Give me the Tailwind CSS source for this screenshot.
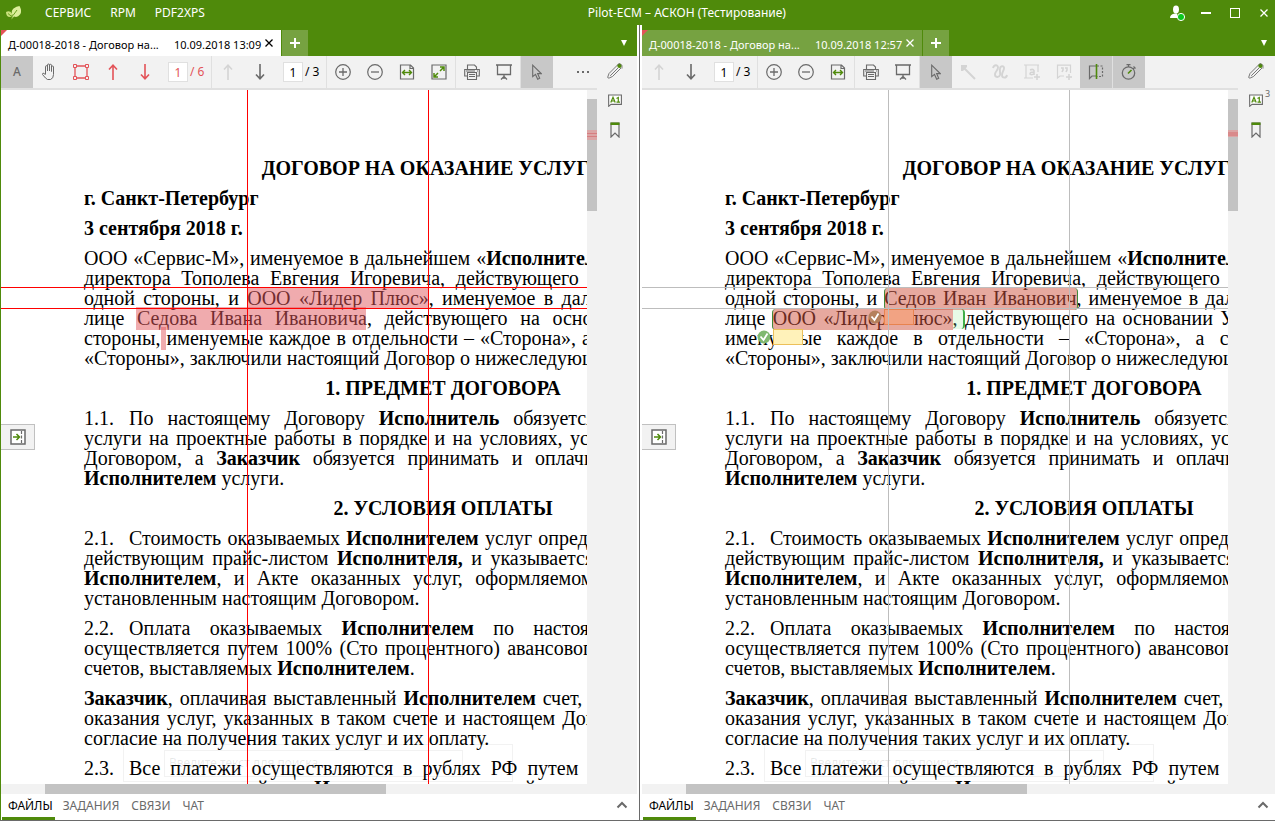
<!DOCTYPE html>
<html lang="ru">
<head>
<meta charset="utf-8">
<title>Pilot-ECM – АСКОН (Тестирование)</title>
<script src="https://cdn.jsdelivr.net/npm/@tailwindcss/browser@4"></script>
</head>
<body class="flex h-screen flex-col overflow-hidden bg-white font-['Noto_Sans','Open_Sans',sans-serif] text-xs text-black">

<svg class="hidden" aria-hidden="true">
  <symbol id="hand" viewBox="0 0 16 18"><path d="M4.500 11V3.700a1 1 0 0 1 2 0V8V2a1 1 0 0 1 2 0v6V2.300a1 1 0 0 1 2 0V8.500V4a1 1 0 0 1 2 0v7.500q0 4-3 5H6.500Q5 16 1.500 11.500Q1.200 10 3 10.200L4.500 12" fill="none" stroke="currentColor" stroke-linejoin="round"/></symbol>
  <symbol id="frame" viewBox="0 0 16 16"><path d="M2 2h12v12H2z" fill="none" stroke="currentColor" stroke-width="1.300"/><path d="M.5.500h3v3h-3zM12.500.500h3v3h-3zM.5 12.500h3v3h-3zM12.500 12.500h3v3h-3z" fill="#f2f2f2" stroke="currentColor"/></symbol>
  <symbol id="up" viewBox="0 0 10 16"><path d="M5 16V1.500M1 5.500L5 1.200l4 4.300" fill="none" stroke="currentColor" stroke-width="1.600"/></symbol>
  <symbol id="down" viewBox="0 0 10 16"><path d="M5 0v14.500M1 10.500l4 4.300 4-4.300" fill="none" stroke="currentColor" stroke-width="1.600"/></symbol>
  <symbol id="plus" viewBox="0 0 16 16"><path d="M8 4v8M4 8h8" stroke="currentColor" stroke-width="1.300"/><circle cx="8" cy="8" r="7.300" fill="none" stroke="currentColor" stroke-width="1.200"/></symbol>
  <symbol id="minus" viewBox="0 0 16 16"><path d="M4 8h8" stroke="currentColor" stroke-width="1.300"/><circle cx="8" cy="8" r="7.300" fill="none" stroke="currentColor" stroke-width="1.200"/></symbol>
  <symbol id="fitw" viewBox="0 0 16 16"><path d="M1.500 1h10l3 3v11h-13zM11 1v3.500h3.500" fill="none" stroke="currentColor" stroke-width="1.200"/><path d="M4 8.500h8M6 6L3.500 8.500 6 11M10 6l2.500 2.500L10 11" fill="none" stroke="#4f8a0b" stroke-width="1.400"/></symbol>
  <symbol id="fitp" viewBox="0 0 16 16"><path d="M1 1h14v14H1z" fill="none" stroke="currentColor" stroke-width="1.200"/><path d="M9 7l3.500-3.500M9 3h4v4M7 9l-3.500 3.500M3 9v4h4" fill="none" stroke="#4f8a0b" stroke-width="1.500"/></symbol>
  <symbol id="print" viewBox="0 0 16 16"><path d="M3.500 5V1h7l2 2v2M3.500 12H.700V5.500h14.600V12h-2.800M3.500 8.500h9v7h-9zM5 10.500h6M5 12.500h6" fill="none" stroke="currentColor" stroke-width="1.100"/><path d="M2 7h9M13 7h1" stroke="currentColor"/></symbol>
  <symbol id="screen" viewBox="0 0 16 16"><path d="M0 1h16M1.500 1v9.500h13V1M8 10.500V15M5 15.500l3-3 3 3" fill="none" stroke="currentColor" stroke-width="1.300"/></symbol>
  <symbol id="cursor" viewBox="0 0 10 16"><path d="M.700 1.200v11.500l2.800-2.300 2.200 4.800 2-1-2.100-4.600h3.600z" fill="none" stroke="currentColor" stroke-width="1.100"/></symbol>
  <symbol id="clip" viewBox="0 0 16 16"><path d="M10.500 2L2 10.500L.700 14.200Q.800 15.500 2.200 15L5.500 13.500L14 5M3.200 12.800L11 5" fill="none" stroke="currentColor" stroke-width=".9"/><circle cx="12.500" cy="2.800" r="2.200" fill="#4f8a0b"/><path d="M10.500 1.500L13 .600l2 2v3" fill="none" stroke="currentColor" stroke-width=".8"/></symbol>
  <symbol id="note" viewBox="0 0 14 13"><path d="M.600 1h12.800v9.400H3L.700 12.300z" fill="#fff" stroke="currentColor" stroke-width="1.100"/><path d="M2.800 8.500L5 3.200l2.200 5.300M3.500 7h3M8.500 4.500l1.800-1V8M8.500 8.200h3.500" fill="none" stroke="#4f8a0b" stroke-width="1.200"/></symbol>
  <symbol id="mark" viewBox="0 0 10 16"><path d="M1 1h8v14l-4-4-4 4z" fill="none" stroke="currentColor" stroke-width="1.200"/><path d="M.500.500h9V3h-9z" fill="#4f8a0b"/></symbol>
  <symbol id="leader" viewBox="0 0 16 16"><path d="M15 15L3 3" stroke="currentColor" stroke-width="2"/><path d="M1 7V1h6v2L3 7z" fill="currentColor"/></symbol>
  <symbol id="squiggle" viewBox="0 0 16 16"><path d="M1 4C2 .500 6 .500 6 3.500 6 6.500 3 7.500 3 10.500 3 13.500 7 14 8 11 8.500 9 7.500 7 8 4.500 8.500 1.500 12.500 1.500 12 4.500 11.700 7 10 8 10 11 10 14.500 14.500 14.500 15 11" fill="none" stroke="currentColor" stroke-width="1.900"/></symbol>
  <symbol id="textplus" viewBox="0 0 16 16"><path d="M0 1h15M2 1v13M14 1v7M0 14h9" fill="none" stroke="currentColor" stroke-width="1.200"/><path d="M6 6q3-1.500 4 .500V11M10 8Q6 8 6 9.700T10 10M10 13h6M13 10v6" fill="none" stroke="currentColor" stroke-width="1.500"/></symbol>
  <symbol id="noteplus" viewBox="0 0 16 16"><path d="M8 12H4l-2.500 2V1.200h13V9" fill="none" stroke="currentColor" stroke-width="1.200"/><path d="M5 4h2v2L6 8M9 4h2v2l-1 2M10 13h6M13 10v6" fill="none" stroke="currentColor" stroke-width="1.600"/></symbol>
  <symbol id="compare" viewBox="0 0 16 16"><path d="M8 2H1.500v12.500L4 12h4" fill="none" stroke="currentColor" stroke-width="1.200"/><path d="M9 2h5.500v10.500H9" fill="none" stroke="currentColor" stroke-width="1.200" stroke-dasharray="2 1.500"/><path d="M8.500 0v15" stroke="#4f8a0b" stroke-width="1.600"/></symbol>
  <symbol id="timer" viewBox="0 0 16 16"><circle cx="7.500" cy="9" r="6.200" fill="none" stroke="currentColor" stroke-width="1.300"/><path d="M5.500.700h4M7.500 1v2M12.500 2.500l2 2M12 5l1.500-1.500" stroke="currentColor" stroke-width="1.200"/><path d="M7 9.500l3.500-3.500" stroke="#4f8a0b" stroke-width="1.600"/></symbol>
  <symbol id="panel" viewBox="0 0 16 16"><path d="M1 1h14v14H1z" fill="#fff" stroke="currentColor" stroke-width="1.500"/><path d="M11.500 2v13" stroke="currentColor" stroke-width="1.200" stroke-dasharray="3 1.500"/><path d="M3 8h6.500M6.500 5l3 3-3 3" fill="none" stroke="#4f8a0b" stroke-width="1.500"/></symbol>
  <symbol id="chev" viewBox="0 0 12 8"><path d="M1.500 6.500L6 2l4.500 4.500" fill="none" stroke="currentColor" stroke-width="2"/></symbol>
  <symbol id="add" viewBox="0 0 10 10"><path d="M5 0v10M0 5h10" stroke="currentColor" stroke-width="2"/></symbol>
  <symbol id="cross" viewBox="0 0 8 8"><path d="M.500.500l7 7M7.500.500l-7 7" stroke="currentColor" stroke-width="1.300"/></symbol>
  <symbol id="tick" viewBox="0 0 14 14"><circle cx="7" cy="7" r="6.500" fill="currentColor"/><path d="M3.500 6.500L6.500 10 10.500 3.500" fill="none" stroke="#fff" stroke-width="1.800"/></symbol>
</svg>

<header class="flex h-[25px] shrink-0 items-center bg-[#4f8a0b] text-white">
  <svg class="ml-1.5 mr-6 h-4 w-[15px]" viewBox="0 0 15 16"><path d="M0 7q3.500-2 6 1.500Q6.500 12 4 12Q0 12 0 7z" fill="#c9e07c"/><path d="M6.500 10q-2-4 1-6.500t6-2.500q3 5 .500 8.500T8 11.500l-2.500 3" fill="#dcee9c"/><path d="M2 8.500l3 2.500M7 10.500l4-5.500M6 10v4" stroke="#6a9f20" fill="none"/></svg>
  <nav class="flex gap-[19px]"><button>СЕРВИС</button><button>RPM</button><button>PDF2XPS</button></nav>
  <h1 class="flex-1 text-center">Pilot-ECM – АСКОН (Тестирование)</h1>
  <div class="flex items-center pr-[7px]">
    <button class="mr-4" aria-label="Пользователь"><svg class="h-4 w-4" viewBox="0 0 16 16"><ellipse cx="7" cy="4.500" rx="3" ry="4" fill="#fff"/><path d="M1 13q0-4 5-4.500h2L9 13z" fill="#fff"/><circle cx="12" cy="12" r="3.600" fill="#0bc81e" stroke="#fff"/></svg></button>
    <button class="mr-[19px]" aria-label="Свернуть"><span class="block h-0.5 w-2.5 bg-white"></span></button>
    <button class="mr-5" aria-label="Развернуть"><span class="block h-2.5 w-2.5 border border-white"></span></button>
    <button aria-label="Закрыть"><svg class="h-2 w-2"><use href="#cross"/></svg></button>
  </div>
</header>

<main class="grid min-h-0 flex-1 grid-cols-[1px_636fr_5px_633fr] border-b border-[#6a6a6a]">
  <div class="bg-[#4f8a0b]"></div>

  <section class="flex min-h-0 min-w-0 flex-col">
    <div class="flex h-[31px] shrink-0 items-end bg-[#4f8a0b]">
      <div class="relative flex h-[26px] w-[280px] items-center whitespace-nowrap bg-white pl-[7px] pr-2 pt-1 text-[11px]">
        <span class="absolute left-0 top-0 h-1.5 w-1.5 bg-[#e35358] [clip-path:polygon(0_0,100%_0,0_100%)]"></span>
        <span class="w-[166px]">Д-00018-2018 - Договор на...</span><span>10.09.2018 13:09</span>
        <button class="mb-1 ml-auto" aria-label="Закрыть вкладку"><svg class="h-2 w-2"><use href="#cross"/></svg></button>
      </div>
      <button class="ml-px flex h-[26px] w-[26px] items-center justify-center bg-[#76a241] text-white" aria-label="Новая вкладка"><svg class="h-2.5 w-2.5"><use href="#add"/></svg></button>
      <button class="ml-auto mr-2.5 h-[26px] text-white" aria-label="Список вкладок"><span class="block h-1.5 w-1.5 bg-white [clip-path:polygon(0_0,100%_0,50%_100%)]"></span></button>
    </div>
    <div class="flex min-h-0 flex-1">
      <div class="flex min-w-0 flex-1 flex-col">
        <div class="flex h-[34px] shrink-0 items-stretch border-b-2 border-[#e0e0e0] bg-[#f2f2f2] text-[#6a6a6a]">
          <button class="w-8 bg-[#c8c8c8] font-medium">A</button>
          <button class="flex w-8 items-center justify-center" aria-label="Рука"><svg class="h-[18px] w-4"><use href="#hand"/></svg></button>
          <button class="flex w-8 items-center justify-center text-[#e35358]" aria-label="Рамка"><svg class="h-4 w-4"><use href="#frame"/></svg></button>
          <button class="flex w-8 items-center justify-center text-[#e35358]" aria-label="Предыдущее отличие"><svg class="h-4 w-2.5"><use href="#up"/></svg></button>
          <button class="flex w-8 items-center justify-center text-[#e35358]" aria-label="Следующее отличие"><svg class="h-4 w-2.5"><use href="#down"/></svg></button>
          <label class="flex w-[50px] items-center gap-0.5 pl-[7px] text-[#e35358]"><input class="h-5 w-5 border border-[#e0e0e0] bg-white text-center" value="1" aria-label="Отличие"><span>/ 6</span></label>
          <span class="w-px bg-[#e0e0e0]"></span>
          <button class="flex w-8 items-center justify-center text-[#d4d4d4]" aria-label="Предыдущая страница"><svg class="h-4 w-2.5"><use href="#up"/></svg></button>
          <button class="flex w-8 items-center justify-center" aria-label="Следующая страница"><svg class="h-4 w-2.5"><use href="#down"/></svg></button>
          <label class="flex w-[50px] items-center gap-0.5 pl-[7px] text-black"><input class="h-5 w-5 border border-[#e0e0e0] bg-white text-center" value="1" aria-label="Страница"><span>/ 3</span></label>
          <span class="w-px bg-[#e0e0e0]"></span>
          <button class="flex w-8 items-center justify-center" aria-label="Увеличить"><svg class="h-4 w-4"><use href="#plus"/></svg></button>
          <button class="flex w-8 items-center justify-center" aria-label="Уменьшить"><svg class="h-4 w-4"><use href="#minus"/></svg></button>
          <button class="flex w-8 items-center justify-center" aria-label="По ширине"><svg class="h-4 w-4"><use href="#fitw"/></svg></button>
          <button class="flex w-8 items-center justify-center" aria-label="Страница целиком"><svg class="h-4 w-4"><use href="#fitp"/></svg></button>
          <span class="w-px bg-[#e0e0e0]"></span>
          <button class="flex w-8 items-center justify-center" aria-label="Печать"><svg class="h-4 w-4"><use href="#print"/></svg></button>
          <button class="flex w-8 items-center justify-center" aria-label="Презентация"><svg class="h-4 w-4"><use href="#screen"/></svg></button>
          <span class="w-px bg-[#e0e0e0]"></span>
          <button class="flex w-8 items-center justify-center bg-[#c8c8c8]" aria-label="Курсор"><svg class="h-4 w-2.5"><use href="#cursor"/></svg></button>
          <button class="ml-auto mr-2 flex items-center gap-[3px]" aria-label="Ещё"><span class="h-0.5 w-0.5 bg-[#6a6a6a]"></span><span class="h-0.5 w-0.5 bg-[#6a6a6a]"></span><span class="h-0.5 w-0.5 bg-[#6a6a6a]"></span></button>
        </div>
        <div class="flex min-h-0 flex-1">
          <div class="relative min-w-0 flex-1 overflow-hidden bg-white">
            <article class="flex w-[801px] flex-col gap-2.5 whitespace-nowrap pl-[83px] pt-[68px] font-['Liberation_Serif',serif] text-xl/5 text-black">
              <h2 class="text-center font-bold">ДОГОВОР НА ОКАЗАНИЕ УСЛУГ №1</h2>
              <p class="font-bold">г. Санкт-Петербург</p>
              <p class="font-bold">3 сентября 2018 г.</p>
              <div class="[text-align-last:justify]">
                <p>ООО «Сервис-М», именуемое в дальнейшем «<b>Исполнитель</b>», в лице генерального</p>
                <p>директора Тополева Евгения Игоревича, действующего на основании Устава, с</p>
                <p>одной стороны, и ООО «Лидер Плюс», именуемое в дальнейшем «<b>Заказчик</b>», в</p>
                <p>лице Седова Ивана Ивановича, действующего на основании Устава, с одной</p>
                <p>стороны, именуемые каждое в отдельности – «Сторона», а совместно далее вместе</p>
                <p class="[text-align-last:left]">«Стороны», заключили настоящий Договор о нижеследующем:</p>
              </div>
              <div data-terms class="contents"></div>
            </article>
            <div class="absolute left-[246px] top-[197px] h-[22px] w-[182px] bg-[#e1575d]/50"></div>
            <div class="absolute left-[135px] top-[217px] h-[23px] w-[230px] bg-[#e1575d]/50"></div>
            <div class="absolute left-[160px] top-[237px] h-[23px] w-[5px] bg-[#e1575d]/50"></div>
            <div class="absolute inset-y-0 left-[246px] w-px bg-[#ff0000]"></div>
            <div class="absolute inset-y-0 left-[427px] w-px bg-[#ff0000]"></div>
            <div class="absolute inset-x-0 top-[197px] h-px bg-[#ff0000]"></div>
            <div class="absolute inset-x-0 top-[218px] h-px bg-[#ff0000]"></div>
            <button class="absolute left-0 top-[334px] flex h-[26px] w-[34px] items-center justify-center border border-l-0 border-[#c0c0c0] bg-[#f2f2f2] text-[#6a6a6a]" aria-label="Показать панель"><svg class="h-4 w-4"><use href="#panel"/></svg></button>
          </div>
          <div class="relative w-2.5 bg-[#f2f2f2]">
            <div class="absolute inset-x-0 top-[9px] h-28 bg-[#c3c3c3]"></div>
            <div class="absolute inset-x-0 top-10 flex h-2.5 flex-col justify-evenly bg-[#dba5a5]"><span class="h-px bg-[#d77e80]"></span><span class="h-px bg-[#d77e80]"></span></div>
          </div>
        </div>
        <div class="h-2.5 shrink-0 bg-[#f2f2f2] pl-11"><div class="h-2.5 w-[341px] bg-[#c3c3c3]"></div></div>
      </div>
      <aside class="flex w-10 shrink-0 flex-col items-center gap-[15px] bg-[#f2f2f2] pr-1 pt-[7px] text-[#6a6a6a]">
        <button aria-label="Аннотации"><svg class="h-4 w-4"><use href="#clip"/></svg></button>
        <button aria-label="Замечания"><svg class="h-[13px] w-3.5"><use href="#note"/></svg></button>
        <button aria-label="Закладки"><svg class="h-4 w-2.5"><use href="#mark"/></svg></button>
      </aside>
    </div>
    <div class="flex h-[26px] shrink-0 items-stretch bg-white text-[#6a6a6a]">
      <button class="ml-px mr-2 border-b-[3px] border-[#4f8a0b] pl-1.5 pr-0.5 text-black">ФАЙЛЫ</button>
      <div class="flex gap-3 pb-[3px]"><button>ЗАДАНИЯ</button><button>СВЯЗИ</button><button>ЧАТ</button></div>
      <button class="ml-auto mr-[9px] pb-1" aria-label="Развернуть панель"><svg class="h-2 w-3"><use href="#chev"/></svg></button>
    </div>
  </section>

  <div class="flex justify-center bg-white"><div class="w-px bg-[#6a6a6a]"></div></div>

  <section class="flex min-h-0 min-w-0 flex-col">
    <div class="flex h-[31px] shrink-0 items-end bg-[#4f8a0b]">
      <div class="relative flex h-[26px] w-[280px] items-center whitespace-nowrap bg-[#76a241] pl-[7px] pr-2 pt-1 text-[11px] text-white">
        <span class="absolute left-0 top-0 h-1.5 w-1.5 bg-[#e35358] [clip-path:polygon(0_0,100%_0,0_100%)]"></span>
        <span class="w-[166px]">Д-00018-2018 - Договор на...</span><span>10.09.2018 12:57</span>
        <button class="mb-1 ml-auto" aria-label="Закрыть вкладку"><svg class="h-2 w-2"><use href="#cross"/></svg></button>
      </div>
      <button class="ml-px flex h-[26px] w-[26px] items-center justify-center bg-[#76a241] text-white" aria-label="Новая вкладка"><svg class="h-2.5 w-2.5"><use href="#add"/></svg></button>
      <button class="ml-auto mr-2 h-[26px] text-white" aria-label="Список вкладок"><span class="block h-1.5 w-1.5 bg-white [clip-path:polygon(0_0,100%_0,50%_100%)]"></span></button>
    </div>
    <div class="flex min-h-0 flex-1">
      <div class="flex min-w-0 flex-1 flex-col">
        <div class="flex h-[34px] shrink-0 items-stretch border-b-2 border-[#e0e0e0] bg-[#f2f2f2] pl-px text-[#6a6a6a]">
          <button class="flex w-8 items-center justify-center text-[#d4d4d4]" aria-label="Предыдущая страница"><svg class="h-4 w-2.5"><use href="#up"/></svg></button>
          <button class="flex w-8 items-center justify-center" aria-label="Следующая страница"><svg class="h-4 w-2.5"><use href="#down"/></svg></button>
          <label class="flex w-[50px] items-center gap-0.5 pl-[7px] text-black"><input class="h-5 w-5 border border-[#e0e0e0] bg-white text-center" value="1" aria-label="Страница"><span>/ 3</span></label>
          <span class="w-px bg-[#e0e0e0]"></span>
          <button class="flex w-8 items-center justify-center" aria-label="Увеличить"><svg class="h-4 w-4"><use href="#plus"/></svg></button>
          <button class="flex w-8 items-center justify-center" aria-label="Уменьшить"><svg class="h-4 w-4"><use href="#minus"/></svg></button>
          <button class="flex w-8 items-center justify-center" aria-label="По ширине"><svg class="h-4 w-4"><use href="#fitw"/></svg></button>
          <span class="w-px bg-[#e0e0e0]"></span>
          <button class="flex w-8 items-center justify-center" aria-label="Печать"><svg class="h-4 w-4"><use href="#print"/></svg></button>
          <button class="flex w-8 items-center justify-center" aria-label="Презентация"><svg class="h-4 w-4"><use href="#screen"/></svg></button>
          <span class="w-px bg-[#e0e0e0]"></span>
          <button class="flex w-8 items-center justify-center bg-[#c8c8c8]" aria-label="Курсор"><svg class="h-4 w-2.5"><use href="#cursor"/></svg></button>
          <button class="flex w-8 items-center justify-center text-[#d4d4d4]" aria-label="Стрелка"><svg class="h-4 w-4"><use href="#leader"/></svg></button>
          <button class="flex w-8 items-center justify-center text-[#d4d4d4]" aria-label="Линия от руки"><svg class="h-4 w-4"><use href="#squiggle"/></svg></button>
          <button class="flex w-8 items-center justify-center text-[#d4d4d4]" aria-label="Добавить текст"><svg class="h-4 w-4"><use href="#textplus"/></svg></button>
          <button class="flex w-8 items-center justify-center text-[#d4d4d4]" aria-label="Добавить замечание"><svg class="h-4 w-4"><use href="#noteplus"/></svg></button>
          <button class="flex w-8 items-center justify-center bg-[#c8c8c8]" aria-label="Сравнить"><svg class="h-4 w-4"><use href="#compare"/></svg></button>
          <span class="w-px bg-[#e0e0e0]"></span>
          <button class="flex w-8 items-center justify-center bg-[#c8c8c8]" aria-label="История версий"><svg class="h-4 w-4"><use href="#timer"/></svg></button>
        </div>
        <div class="flex min-h-0 flex-1">
          <div class="relative min-w-0 flex-1 overflow-hidden bg-white">
            <article class="flex w-[801px] flex-col gap-2.5 whitespace-nowrap pl-[83px] pt-[68px] font-['Liberation_Serif',serif] text-xl/5 text-black">
              <h2 class="text-center font-bold">ДОГОВОР НА ОКАЗАНИЕ УСЛУГ №1</h2>
              <p class="font-bold">г. Санкт-Петербург</p>
              <p class="font-bold">3 сентября 2018 г.</p>
              <div class="[text-align-last:justify]">
                <p>ООО «Сервис-М», именуемое в дальнейшем «<b>Исполнитель</b>», в лице генерального</p>
                <p>директора Тополева Евгения Игоревича, действующего на основании Устава, с</p>
                <p>одной стороны, и Седов Иван Иванович, именуемое в дальнейшем «<b>Заказчик</b>», в</p>
                <p>лице ООО «Лидер Плюс», действующего на основании Устава, с другой стороны</p>
                <p>именуемые каждое в отдельности – «Сторона», а совместно далее вместе</p>
                <p class="[text-align-last:left]">«Стороны», заключили настоящий Договор о нижеследующем:</p>
              </div>
              <div data-terms class="contents"></div>
            </article>
            <div class="absolute left-[311px] top-[219px] h-5 w-3 rounded-r-sm border-r-2 border-[#3fae49] bg-[#a0f0a0]/25"></div>
            <div class="absolute left-[242px] top-[198px] h-[22px] w-[194px] rounded-sm border-x border-[#3f8a3a] bg-[#cf5440]/50"></div>
            <div class="absolute left-[130px] top-[219px] h-[21px] w-[181px] rounded-l-sm border-l border-[#3f8a3a] bg-[#cf5440]/50"></div>
            <div class="absolute left-[242px] top-[219px] h-4 w-[30px] border border-[#e8834f] bg-[#f2a383]"></div>
            <svg class="absolute left-[226px] top-[220px] h-3.5 w-3.5 text-[#b5805c]"><use href="#tick"/></svg>
            <div class="absolute left-[131px] top-[239px] h-4 w-[30px] border border-[#ecc05a] bg-[#fff2ba]"></div>
            <svg class="absolute left-[115px] top-[240px] h-3.5 w-3.5 text-[#7fb870]"><use href="#tick"/></svg>
            <div class="absolute inset-y-0 left-[246px] w-px bg-[#bdbdbd]"></div>
            <div class="absolute inset-y-0 left-[427px] w-px bg-[#bdbdbd]"></div>
            <div class="absolute inset-x-0 top-[197px] h-px bg-[#bdbdbd]"></div>
            <div class="absolute inset-x-0 top-[218px] h-px bg-[#bdbdbd]"></div>
            <button class="absolute left-0 top-[334px] flex h-[26px] w-[34px] items-center justify-center border border-l-0 border-[#c0c0c0] bg-[#f2f2f2] text-[#6a6a6a]" aria-label="Показать панель"><svg class="h-4 w-4"><use href="#panel"/></svg></button>
          </div>
          <div class="relative w-2.5 bg-[#f2f2f2]">
            <div class="absolute inset-x-0 top-[9px] h-28 bg-[#c3c3c3]"></div>
            <div class="absolute inset-x-0 top-10 flex h-[7px] flex-col justify-center bg-[#dba5a5]"><span class="h-1 bg-[#d98a8b]"></span></div>
          </div>
        </div>
        <div class="h-2.5 shrink-0 bg-[#f2f2f2] pl-11"><div class="h-2.5 w-[341px] bg-[#c3c3c3]"></div></div>
      </div>
      <aside class="flex w-[37px] shrink-0 flex-col items-center gap-[15px] bg-[#f2f2f2] pr-px pt-[7px] text-[#6a6a6a]">
        <button aria-label="Аннотации"><svg class="h-4 w-4"><use href="#clip"/></svg></button>
        <button class="relative" aria-label="Замечания"><svg class="h-[13px] w-3.5"><use href="#note"/></svg><span class="absolute -top-1.5 left-4 text-[9px]/3">3</span></button>
        <button aria-label="Закладки"><svg class="h-4 w-2.5"><use href="#mark"/></svg></button>
      </aside>
    </div>
    <div class="flex h-[26px] shrink-0 items-stretch bg-white text-[#6a6a6a]">
      <button class="ml-px mr-2 border-b-[3px] border-[#4f8a0b] pl-1.5 pr-0.5 text-black">ФАЙЛЫ</button>
      <div class="flex gap-3 pb-[3px]"><button>ЗАДАНИЯ</button><button>СВЯЗИ</button><button>ЧАТ</button></div>
      <button class="ml-auto mr-1.5 pb-1" aria-label="Развернуть панель"><svg class="h-2 w-3"><use href="#chev"/></svg></button>
    </div>
  </section>
</main>

<template id="terms">
  <h3 class="text-center font-bold">1. ПРЕДМЕТ ДОГОВОРА</h3>
  <div class="[text-align-last:justify]">
    <p class="flex"><span class="w-[45px] [text-align-last:left]">1.1.</span><span class="flex-1">По настоящему Договору <b>Исполнитель</b> обязуется оказывать <b>Заказчику</b></span></p>
    <p>услуги на проектные работы в порядке и на условиях, установленных настоящим</p>
    <p>Договором, а <b>Заказчик</b> обязуется принимать и оплачивать оказанные услуги</p>
    <p class="[text-align-last:left]"><b>Исполнителем</b> услуги.</p>
  </div>
  <h3 class="text-center font-bold">2. УСЛОВИЯ ОПЛАТЫ</h3>
  <div class="[text-align-last:justify]">
    <p class="flex"><span class="w-[45px] [text-align-last:left]">2.1.</span><span class="flex-1">Стоимость оказываемых <b>Исполнителем</b> услуг определяется в соответствии с</span></p>
    <p>действующим прайс-листом <b>Исполнителя,</b> и указывается в счетах, оказываемых</p>
    <p><b>Исполнителем</b>, и Акте оказанных услуг, оформляемом в порядке, указанном</p>
    <p class="[text-align-last:left]">установленным настоящим Договором.</p>
  </div>
  <div class="[text-align-last:justify]">
    <p class="flex"><span class="w-[45px] [text-align-last:left]">2.2.</span><span class="flex-1">Оплата оказываемых <b>Исполнителем</b> по настоящему Договору услуг</span></p>
    <p>осуществляется путем 100% (Сто процентного) авансового платежа на основании</p>
    <p class="[text-align-last:left]">счетов, выставляемых <b>Исполнителем</b>.</p>
  </div>
  <div class="[text-align-last:justify]">
    <p><b>Заказчик</b>, оплачивая выставленный <b>Исполнителем</b> счет, с условиями и порядком</p>
    <p>оказания услуг, указанных в таком счете и настоящем Договоре, дает свое полное</p>
    <p class="[text-align-last:left]">согласие на получения таких услуг и их оплату.</p>
  </div>
  <div class="relative [text-align-last:justify]">
    <p class="flex"><span class="w-[45px] [text-align-last:left]">2.3.</span><span class="flex-1">Все платежи осуществляются в рублях РФ путем перечисления денежных</span></p>
    <p class="[text-align-last:left]">средств на расчетный счет <b>Исполнителя</b>, указанный в счете.</p>
    <div class="absolute -top-3.5 left-[39px] h-[38px] w-[390px] border border-black/5 pl-10 pt-[5px] [text-align-last:left]"><div class="h-[27px] w-[299px] border border-black/5 pl-1 font-['Noto_Sans',sans-serif] text-xs/6 text-black/10">Введите текст для поиска</div></div>
  </div>
</template>
<script>
  const terms = document.getElementById('terms');
  document.querySelectorAll('[data-terms]').forEach(el => el.append(terms.content.cloneNode(true)));
</script>
</body>
</html>
